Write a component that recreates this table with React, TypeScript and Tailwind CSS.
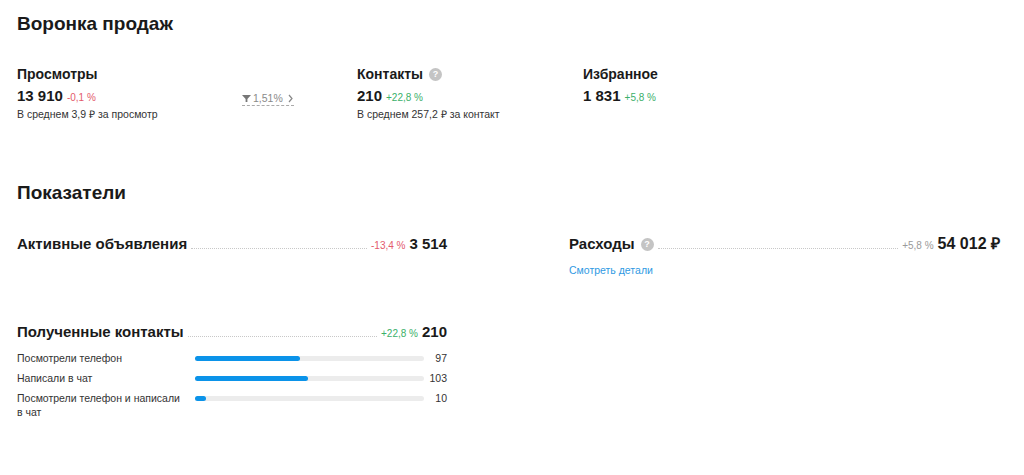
const font = { fontFamily: '"Liberation Sans", Arial, sans-serif' };

function Help() {
  return (
    <span className="ml-[6px] inline-flex h-[13px] w-[13px] items-center justify-center rounded-full bg-[#c4c4c4] text-[9px] font-bold leading-none text-white">?</span>
  );
}

function Stat({ title, help, value, delta, up, note }: { title: string; help?: boolean; value: string; delta: string; up: boolean; note?: string }) {
  return (
    <div>
      <div className="flex items-center text-[14px] font-bold leading-[16px] text-[#1a1a1a]">{title}{help && <Help />}</div>
      <div className="mt-[5px] flex items-baseline gap-[4px]">
        <span className="text-[15px] font-bold leading-[18px] text-[#1a1a1a]">{value}</span>
        <span className={up ? "text-[10px] text-[#3bb06a]" : "text-[10px] text-[#e35a6c]"}>{delta}</span>
      </div>
      {note && <div className="mt-[3px] text-[10.5px] leading-[13px] text-[#333]">{note}</div>}
    </div>
  );
}

function Metric({ title, help, delta, tone, value, big }: { title: string; help?: boolean; delta: string; tone: "up" | "down" | "gray"; value: string; big?: boolean }) {
  const c = tone === "up" ? "text-[#3bb06a]" : tone === "down" ? "text-[#e35a6c]" : "text-[#9a9a9a]";
  return (
    <div className="flex items-baseline">
      <span className="flex items-center text-[15px] font-bold leading-[18px] text-[#1a1a1a]">{title}{help && <Help />}</span>
      <span className="mx-[4px] flex-1 border-b border-dotted border-[#c8c8c8]" />
      <span className={`mr-[4px] text-[10px] ${c}`}>{delta}</span>
      <span className={big ? "text-[16px] font-bold leading-[18px] text-[#1a1a1a]" : "text-[15px] font-bold leading-[18px] text-[#1a1a1a]"}>{value}</span>
    </div>
  );
}

const ROWS = [
  { label: "Посмотрели телефон", pct: 46, value: "97" },
  { label: "Написали в чат", pct: 49.5, value: "103" },
  { label: "Посмотрели телефон и написали в чат", pct: 5, value: "10" },
];

export default function App() {
  return (
    <div className="min-h-[475px] bg-white px-[17px] pt-[12px]" style={font}>
      <h2 className="text-[19px] font-bold leading-[24px] text-[#1a1a1a]">Воронка продаж</h2>

      <div className="mt-[30px] grid grid-cols-[225px_115px_226px_1fr]">
        <Stat title="Просмотры" value="13 910" delta="-0,1 %" up={false} note="В среднем 3,9 ₽ за просмотр" />
        <div className="pt-[20px]">
          <span className="inline-flex items-center gap-[2px] border-b border-dashed border-[#aaa] text-[10.5px] leading-[13px] text-[#8a8a8a]">
            <svg width="9" height="9" viewBox="0 0 10 10"><path d="M0 1h10L6 5.5V9H4V5.5z" fill="#777" /></svg>
            1,51%
            <svg width="7" height="9" viewBox="0 0 7 9" className="ml-[2px]"><path d="M2 1l3 3.5L2 8" fill="none" stroke="#888" strokeWidth="1.2" /></svg>
          </span>
        </div>
        <Stat title="Контакты" help value="210" delta="+22,8 %" up note="В среднем 257,2 ₽ за контакт" />
        <Stat title="Избранное" value="1 831" delta="+5,8 %" up />
      </div>

      <h2 className="mt-[60px] text-[19px] font-bold leading-[24px] text-[#1a1a1a]">Показатели</h2>

      <div className="mt-[30px] flex gap-[122px]">
        <div className="w-[430px]">
          <Metric title="Активные объявления" delta="-13,4 %" tone="down" value="3 514" />

          <div className="mt-[70px]">
            <Metric title="Полученные контакты" delta="+22,8 %" tone="up" value="210" />
            <div className="mt-[10px] flex flex-col gap-[6px]">
              {ROWS.map(r => (
                <div key={r.value} className="flex items-start">
                  <div className="mr-[12px] w-[166px] text-[10.5px] leading-[14px] text-[#333]">{r.label}</div>
                  <div className="mt-[5px] h-[5px] w-[229px] rounded-full bg-[#ececec]">
                    <div className="h-full rounded-full bg-[#0b93e9]" style={{ width: `${r.pct}%` }} />
                  </div>
                  <div className="flex-1 text-right text-[10.5px] leading-[14px] text-[#333]">{r.value}</div>
                </div>
              ))}
            </div>
          </div>
        </div>

        <div className="flex-1 pr-[7px]">
          <Metric title="Расходы" help delta="+5,8 %" tone="gray" value="54 012 ₽" big />
          <a className="mt-[11px] block text-[10.5px] leading-[13px] text-[#2f9ae3]">Смотреть детали</a>
        </div>
      </div>
    </div>
  );
}
